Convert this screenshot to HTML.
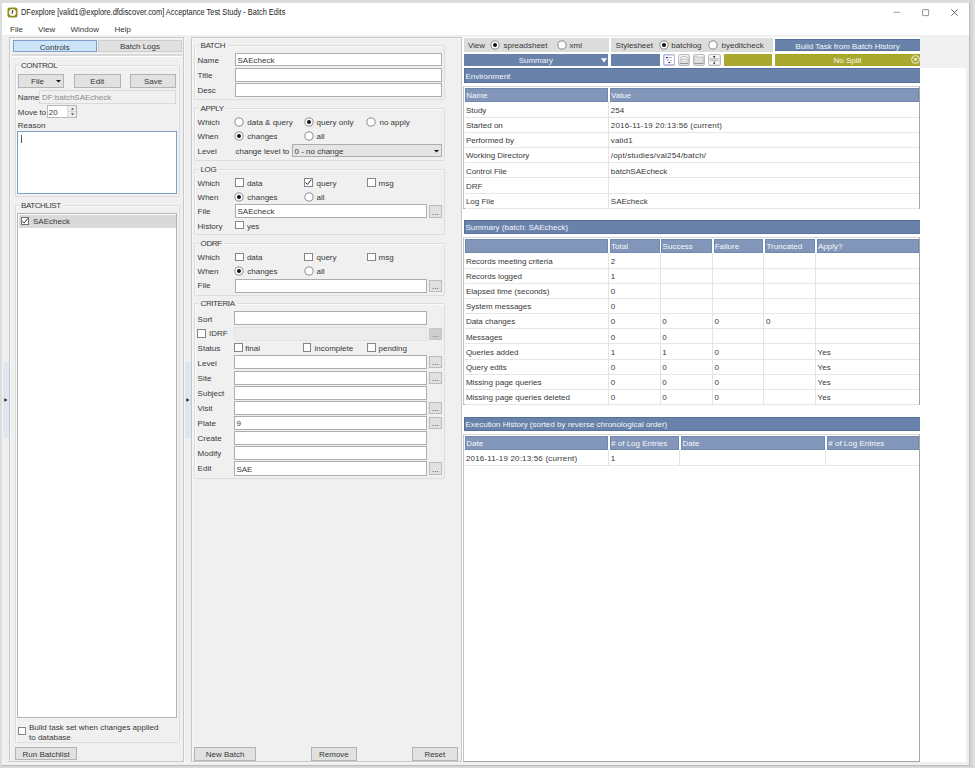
<!DOCTYPE html>
<html><head><meta charset="utf-8"><style>
html,body{margin:0;padding:0;width:975px;height:768px;overflow:hidden;position:relative;background:#dedede}
div{position:absolute}
svg{position:absolute;overflow:visible}
.t{position:absolute;font-family:"Liberation Sans",sans-serif;font-size:8px;line-height:10px;white-space:nowrap;color:#383838}
</style></head><body>
<div style="left:0px;top:0px;width:975px;height:768px;background:#dcdcdc"></div>
<div style="left:970px;top:0px;width:5px;height:768px;background:linear-gradient(to right,#cfcfcf,#e4e4e4)"></div>
<div style="left:0px;top:766px;width:975px;height:2px;background:linear-gradient(to bottom,#cfcfcf,#e0e0e0)"></div>
<div style="left:2px;top:3px;width:968px;height:763px;background:#bdbdbd"></div>
<div style="left:2px;top:3px;width:967px;height:762px;background:#f3f3f3"></div>
<div style="left:3px;top:3px;width:966px;height:762px;background:#f0f0f0"></div>
<div style="left:2px;top:3px;width:967px;height:32px;background:#ffffff"></div>
<svg style="position:absolute;left:7px;top:7px" width="11" height="11" viewBox="0 0 11 11"><rect x="0.5" y="0.5" width="10" height="10" rx="2" fill="#8c8c1e"/><circle cx="5.5" cy="5.5" r="3.6" fill="#f4f4e8"/><path d="M5.6 3.2 L5.2 6.6" stroke="#333" stroke-width="1"/></svg>
<span class="t" style="left:21px;top:7.3px;font-size:8.4px;color:#222;transform-origin:0 0;transform:scaleX(0.886)">DFexplore [valid1@explore.dfdiscover.com] Acceptance Test Study - Batch Edits</span>
<svg style="position:absolute;left:893px;top:8px" width="8" height="8" viewBox="0 0 8 8"><path d="M0.6 4.3 L7 4.3" stroke="#777" stroke-width="0.7"/></svg>
<svg style="position:absolute;left:921.5px;top:8.5px" width="8" height="8" viewBox="0 0 8 8"><rect x="0.6" y="0.6" width="6" height="6" rx="0.6" fill="none" stroke="#666" stroke-width="0.7"/></svg>
<svg style="position:absolute;left:951px;top:9px" width="7" height="7" viewBox="0 0 7 7"><path d="M0.3 0.3 L6.7 6.7 M6.7 0.3 L0.3 6.7" stroke="#444" stroke-width="0.8"/></svg>
<span class="t" style="left:10px;top:24.60px;">File</span>
<span class="t" style="left:38px;top:24.60px;">View</span>
<span class="t" style="left:70.5px;top:24.60px;">Window</span>
<span class="t" style="left:114.5px;top:24.60px;">Help</span>
<div style="left:3px;top:362px;width:6px;height:76px;background:#dfe6f0"></div>
<svg style="position:absolute;left:4px;top:398px" width="4" height="4" viewBox="0 0 4 4"><path d="M0.3 0.2 L3.6 2 L0.3 3.8Z" fill="#222"/></svg>
<div style="left:184.5px;top:362px;width:6.5px;height:76px;background:#dfe6f0"></div>
<svg style="position:absolute;left:186px;top:398px" width="4" height="4" viewBox="0 0 4 4"><path d="M0.3 0.2 L3.6 2 L0.3 3.8Z" fill="#222"/></svg>
<div style="left:10px;top:38px;width:175px;height:725px;border:1px solid #f6f6f6;box-sizing:border-box"></div>
<div style="left:9px;top:37px;width:175px;height:725px;border:1px solid #c8c8c8;box-sizing:border-box"></div>
<div style="left:12.6px;top:40px;width:84px;height:12px;background:#cce4f7;border:1px solid #7d9ccc;box-sizing:border-box"></div>
<span class="t" style="left:12.75px;top:42.85px;width:84px;text-align:center;">Controls</span>
<div style="left:98px;top:40px;width:84px;height:12px;background:#e1e1e1;border:1px solid #cdcdcd;box-sizing:border-box"></div>
<span class="t" style="left:98.0px;top:42.30px;width:84px;text-align:center;">Batch Logs</span>
<div style="left:12px;top:54px;width:170px;height:2px;background:#dadada"></div>
<div style="left:12px;top:56px;width:170px;height:1px;background:#ffffff"></div>
<div style="left:15.5px;top:66px;width:164px;height:130.5px;border:1px solid #fafafa;box-sizing:border-box"></div>
<div style="left:14.5px;top:65px;width:165px;height:131.5px;border:1px solid #dddddd;box-sizing:border-box;border-radius:1px"></div>
<span class="t" style="left:19px;top:61.00px;background:#f0f0f0;padding:0 2px 0 2px;letter-spacing:-0.42px">CONTROL</span>
<div style="left:18px;top:74px;width:46px;height:13.5px;background:#e1e1e1;border:1px solid #b4b4b4;box-sizing:border-box;"></div>
<span class="t" style="left:31px;top:76.80px;">File</span>
<svg style="position:absolute;left:56px;top:79.5px" width="5" height="3" viewBox="0 0 5 3"><path d="M0 0 L5 0 L2.5 2.6Z" fill="#111"/></svg>
<div style="left:74px;top:74px;width:46.5px;height:13.5px;background:#e1e1e1;border:1px solid #b4b4b4;box-sizing:border-box;"></div>
<span class="t" style="left:74.0px;top:76.80px;width:46.5px;text-align:center;">Edit</span>
<div style="left:130px;top:74px;width:46px;height:13.5px;background:#e1e1e1;border:1px solid #b4b4b4;box-sizing:border-box;"></div>
<span class="t" style="left:130.0px;top:76.80px;width:46px;text-align:center;">Save</span>
<span class="t" style="left:17.8px;top:92.60px;">Name</span>
<div style="left:39.4px;top:89.6px;width:137px;height:14px;background:#f0f0f0;border:1px solid #d9d9d9;box-sizing:border-box"></div>
<span class="t" style="left:41.9px;top:92.60px;color:#8a8a8a">DF:batchSAEcheck</span>
<span class="t" style="left:17.8px;top:107.70px;">Move to</span>
<div style="left:47.3px;top:104.8px;width:29.5px;height:13.6px;background:#fff;border:1px solid #b8b8b8;box-sizing:border-box"></div>
<div style="left:67.3px;top:105.8px;width:8.5px;height:11.6px;background:#ececec;border-left:1px solid #dcdcdc;box-sizing:border-box"></div>
<div style="left:68px;top:111.2px;width:7.8px;height:0.8px;background:#d8d8d8"></div>
<svg style="position:absolute;left:69.5px;top:107px" width="5" height="9" viewBox="0 0 5 9"><path d="M1 2.6 L4 2.6 L2.5 1.1Z M1 6.4 L4 6.4 L2.5 7.9Z" fill="#222"/></svg>
<span class="t" style="left:48.8px;top:107.70px;">20</span>
<span class="t" style="left:17.8px;top:120.70px;">Reason</span>
<div style="left:17.2px;top:131.2px;width:160px;height:63px;background:#fff;border:1px solid #7da2ce;box-sizing:border-box"></div>
<div style="left:21px;top:134.5px;width:1px;height:8px;background:#555"></div>
<div style="left:15.5px;top:206px;width:164px;height:537px;border:1px solid #fafafa;box-sizing:border-box"></div>
<div style="left:14.5px;top:205px;width:165px;height:538px;border:1px solid #dddddd;box-sizing:border-box;border-radius:1px"></div>
<span class="t" style="left:19px;top:201.00px;background:#f0f0f0;padding:0 2px 0 2px;letter-spacing:-0.42px">BATCHLIST</span>
<div style="left:17.2px;top:213.3px;width:160px;height:504.6px;background:#fff;border:1px solid #b4b4b4;box-sizing:border-box"></div>
<div style="left:18.5px;top:214.8px;width:157.5px;height:12.8px;background:#d9d9d9"></div>
<div style="left:20.5px;top:216.7px;width:8.5px;height:8.5px;background:#fff;border:1px solid #6f6f6f;box-sizing:border-box"></div>
<svg style="position:absolute;left:21px;top:217px" width="8" height="8" viewBox="0 0 8 8"><path d="M1.3 4.2 L3.2 6 L6.8 1.5" stroke="#222" stroke-width="0.9" fill="none"/></svg>
<span class="t" style="left:33px;top:217.30px;">SAEcheck</span>
<span class="t" style="left:29px;top:722.70px;">Build task set when changes applied</span>
<span class="t" style="left:29px;top:732.50px;">to database</span>
<div style="left:15.4px;top:746.6px;width:61.4px;height:13.5px;background:#e1e1e1;border:1px solid #b4b4b4;box-sizing:border-box;"></div>
<span class="t" style="left:15.400000000000002px;top:749.50px;width:61.4px;text-align:center;">Run Batchlist</span>
<div style="left:192.3px;top:38.3px;width:270.5px;height:724.5px;border:1px solid #f6f6f6;box-sizing:border-box"></div>
<div style="left:191.3px;top:37.3px;width:270.5px;height:724.5px;border:1px solid #c8c8c8;box-sizing:border-box"></div>
<div style="left:17.5px;top:726.8px;width:8.6px;height:8.6px;background:#fff;border:1px solid #858585;box-sizing:border-box"></div>
<div style="left:195.4px;top:46px;width:249.4px;height:54px;border:1px solid #fafafa;box-sizing:border-box"></div>
<div style="left:194.4px;top:45px;width:250.4px;height:55px;border:1px solid #dddddd;box-sizing:border-box;border-radius:1px"></div>
<span class="t" style="left:198.6px;top:41.00px;background:#f0f0f0;padding:0 2px 0 2px;letter-spacing:-0.42px">BATCH</span>
<span class="t" style="left:197.6px;top:55.80px;">Name</span>
<div style="left:235.1px;top:53.2px;width:206.5px;height:13.3px;background:#fff;border:1px solid #adadad;box-sizing:border-box"></div>
<span class="t" style="left:237.5px;top:55.90px;">SAEcheck</span>
<span class="t" style="left:197.6px;top:70.90px;">Title</span>
<div style="left:235.1px;top:68.3px;width:206.5px;height:13.3px;background:#fff;border:1px solid #adadad;box-sizing:border-box"></div>
<span class="t" style="left:197.6px;top:85.90px;">Desc</span>
<div style="left:235.1px;top:83.4px;width:206.5px;height:13.3px;background:#fff;border:1px solid #adadad;box-sizing:border-box"></div>
<div style="left:195.4px;top:109px;width:249.4px;height:51.5px;border:1px solid #fafafa;box-sizing:border-box"></div>
<div style="left:194.4px;top:108px;width:250.4px;height:52.5px;border:1px solid #dddddd;box-sizing:border-box;border-radius:1px"></div>
<span class="t" style="left:198.6px;top:104.00px;background:#f0f0f0;padding:0 2px 0 2px;letter-spacing:-0.42px">APPLY</span>
<span class="t" style="left:197.6px;top:118.30px;">Which</span>
<svg style="position:absolute;left:234.3px;top:117px" width="10" height="10" viewBox="0 0 10 10"><circle cx="5" cy="5" r="4.1" fill="#fff" stroke="#7a7a7a" stroke-width="0.85"/></svg>
<span class="t" style="left:247.3px;top:118.30px;">data &amp; query</span>
<svg style="position:absolute;left:303.7px;top:117px" width="10" height="10" viewBox="0 0 10 10"><circle cx="5" cy="5" r="4.1" fill="#fff" stroke="#7a7a7a" stroke-width="0.85"/><circle cx="5" cy="5" r="2" fill="#111"/></svg>
<span class="t" style="left:316.5px;top:118.30px;">query only</span>
<svg style="position:absolute;left:366.3px;top:117px" width="10" height="10" viewBox="0 0 10 10"><circle cx="5" cy="5" r="4.1" fill="#fff" stroke="#7a7a7a" stroke-width="0.85"/></svg>
<span class="t" style="left:379.5px;top:118.30px;">no apply</span>
<span class="t" style="left:197.6px;top:132.30px;">When</span>
<svg style="position:absolute;left:234.3px;top:131px" width="10" height="10" viewBox="0 0 10 10"><circle cx="5" cy="5" r="4.1" fill="#fff" stroke="#7a7a7a" stroke-width="0.85"/><circle cx="5" cy="5" r="2" fill="#111"/></svg>
<span class="t" style="left:247.3px;top:132.30px;">changes</span>
<svg style="position:absolute;left:303.7px;top:131px" width="10" height="10" viewBox="0 0 10 10"><circle cx="5" cy="5" r="4.1" fill="#fff" stroke="#7a7a7a" stroke-width="0.85"/></svg>
<span class="t" style="left:316.5px;top:132.30px;">all</span>
<span class="t" style="left:197.6px;top:146.60px;">Level</span>
<span class="t" style="left:235.5px;top:146.60px;">change level to</span>
<div style="left:292px;top:143.8px;width:150px;height:13.7px;background:#e5e5e5;border:1px solid #adadad;box-sizing:border-box"></div>
<span class="t" style="left:294.5px;top:146.60px;">0 - no change</span>
<svg style="position:absolute;left:433.5px;top:149.5px" width="5" height="3" viewBox="0 0 5 3"><path d="M0 0 L5 0 L2.5 2.6Z" fill="#111"/></svg>
<div style="left:195.4px;top:170px;width:249.4px;height:65px;border:1px solid #fafafa;box-sizing:border-box"></div>
<div style="left:194.4px;top:169px;width:250.4px;height:66px;border:1px solid #dddddd;box-sizing:border-box;border-radius:1px"></div>
<span class="t" style="left:198.6px;top:165.00px;background:#f0f0f0;padding:0 2px 0 2px;letter-spacing:-0.42px">LOG</span>
<span class="t" style="left:197.6px;top:178.60px;">Which</span>
<div style="left:235.1px;top:178.1px;width:8.6px;height:8.6px;background:#fff;border:1px solid #858585;box-sizing:border-box"></div>
<span class="t" style="left:246.9px;top:178.60px;">data</span>
<div style="left:304.3px;top:178.1px;width:8.6px;height:8.6px;background:#fff;border:1px solid #858585;box-sizing:border-box"></div>
<svg style="position:absolute;left:304.3px;top:178.1px" width="8.6" height="8.6" viewBox="0 0 8 8"><path d="M1.3 4.2 L3.2 6 L6.8 1.5" stroke="#222" stroke-width="0.9" fill="none"/></svg>
<span class="t" style="left:316.5px;top:178.60px;">query</span>
<div style="left:367px;top:178.1px;width:8.6px;height:8.6px;background:#fff;border:1px solid #858585;box-sizing:border-box"></div>
<span class="t" style="left:378.5px;top:178.60px;">msg</span>
<span class="t" style="left:197.6px;top:192.70px;">When</span>
<svg style="position:absolute;left:234.3px;top:191.5px" width="10" height="10" viewBox="0 0 10 10"><circle cx="5" cy="5" r="4.1" fill="#fff" stroke="#7a7a7a" stroke-width="0.85"/><circle cx="5" cy="5" r="2" fill="#111"/></svg>
<span class="t" style="left:247.3px;top:192.70px;">changes</span>
<svg style="position:absolute;left:303.7px;top:191.5px" width="10" height="10" viewBox="0 0 10 10"><circle cx="5" cy="5" r="4.1" fill="#fff" stroke="#7a7a7a" stroke-width="0.85"/></svg>
<span class="t" style="left:316.5px;top:192.70px;">all</span>
<span class="t" style="left:197.6px;top:207.00px;">File</span>
<div style="left:235.1px;top:204.3px;width:191.8px;height:13.8px;background:#fff;border:1px solid #adadad;box-sizing:border-box"></div>
<span class="t" style="left:237.5px;top:207.25px;">SAEcheck</span>
<div style="left:429.3px;top:205.3px;width:12.3px;height:12.4px;background:#e1e1e1;border:1px solid #bcbcbc;box-sizing:border-box"></div>
<span class="t" style="left:429.3px;top:207.60px;width:12.3px;text-align:center;color:#222">...</span>
<span class="t" style="left:197.6px;top:221.70px;">History</span>
<div style="left:235.1px;top:220.7px;width:8.6px;height:8.6px;background:#fff;border:1px solid #858585;box-sizing:border-box"></div>
<span class="t" style="left:246.9px;top:221.70px;">yes</span>
<div style="left:195.4px;top:244px;width:249.4px;height:51.5px;border:1px solid #fafafa;box-sizing:border-box"></div>
<div style="left:194.4px;top:243px;width:250.4px;height:52.5px;border:1px solid #dddddd;box-sizing:border-box;border-radius:1px"></div>
<span class="t" style="left:198.6px;top:239.00px;background:#f0f0f0;padding:0 2px 0 2px;letter-spacing:-0.42px">ODRF</span>
<span class="t" style="left:197.6px;top:253.30px;">Which</span>
<div style="left:235.1px;top:252.5px;width:8.6px;height:8.6px;background:#fff;border:1px solid #858585;box-sizing:border-box"></div>
<span class="t" style="left:246.9px;top:253.30px;">data</span>
<div style="left:304.3px;top:252.5px;width:8.6px;height:8.6px;background:#fff;border:1px solid #858585;box-sizing:border-box"></div>
<span class="t" style="left:316.5px;top:253.30px;">query</span>
<div style="left:367px;top:252.5px;width:8.6px;height:8.6px;background:#fff;border:1px solid #858585;box-sizing:border-box"></div>
<span class="t" style="left:378.5px;top:253.30px;">msg</span>
<span class="t" style="left:197.6px;top:267.30px;">When</span>
<svg style="position:absolute;left:234.3px;top:266px" width="10" height="10" viewBox="0 0 10 10"><circle cx="5" cy="5" r="4.1" fill="#fff" stroke="#7a7a7a" stroke-width="0.85"/><circle cx="5" cy="5" r="2" fill="#111"/></svg>
<span class="t" style="left:247.3px;top:267.30px;">changes</span>
<svg style="position:absolute;left:303.7px;top:266px" width="10" height="10" viewBox="0 0 10 10"><circle cx="5" cy="5" r="4.1" fill="#fff" stroke="#7a7a7a" stroke-width="0.85"/></svg>
<span class="t" style="left:316.5px;top:267.30px;">all</span>
<span class="t" style="left:197.6px;top:281.30px;">File</span>
<div style="left:235.1px;top:279px;width:191.8px;height:13.6px;background:#fff;border:1px solid #adadad;box-sizing:border-box"></div>
<div style="left:429.3px;top:279.6px;width:12.3px;height:12.4px;background:#e1e1e1;border:1px solid #bcbcbc;box-sizing:border-box"></div>
<span class="t" style="left:429.3px;top:281.90px;width:12.3px;text-align:center;color:#222">...</span>
<div style="left:195.4px;top:304px;width:249.4px;height:175px;border:1px solid #fafafa;box-sizing:border-box"></div>
<div style="left:194.4px;top:303px;width:250.4px;height:176px;border:1px solid #dddddd;box-sizing:border-box;border-radius:1px"></div>
<span class="t" style="left:198.6px;top:299.00px;background:#f0f0f0;padding:0 2px 0 2px;letter-spacing:-0.42px">CRITERIA</span>
<span class="t" style="left:197.6px;top:314.70px;">Sort</span>
<div style="left:234px;top:311px;width:193px;height:14.2px;background:#fff;border:1px solid #adadad;box-sizing:border-box"></div>
<div style="left:197.3px;top:329.1px;width:8.6px;height:8.6px;background:#fff;border:1px solid #858585;box-sizing:border-box"></div>
<span class="t" style="left:209px;top:329.30px;">IDRF</span>
<div style="left:234px;top:326.6px;width:193px;height:14px;background:#ececec;border:1px solid #e2e2e2;box-sizing:border-box"></div>
<div style="left:429.3px;top:327.6px;width:12.3px;height:12.4px;background:#cdcdcd;border:1px solid #c6c6c6;box-sizing:border-box"></div>
<span class="t" style="left:429.3px;top:330.10px;width:12.3px;text-align:center;color:#666">...</span>
<span class="t" style="left:197.6px;top:344.00px;">Status</span>
<div style="left:234px;top:343.1px;width:8.6px;height:8.6px;background:#fff;border:1px solid #858585;box-sizing:border-box"></div>
<span class="t" style="left:245.3px;top:344.00px;">final</span>
<div style="left:302.9px;top:343.1px;width:8.6px;height:8.6px;background:#fff;border:1px solid #858585;box-sizing:border-box"></div>
<span class="t" style="left:314.5px;top:344.00px;">incomplete</span>
<div style="left:367px;top:343.1px;width:8.6px;height:8.6px;background:#fff;border:1px solid #858585;box-sizing:border-box"></div>
<span class="t" style="left:378.5px;top:344.00px;">pending</span>
<span class="t" style="left:197.6px;top:358.70px;">Level</span>
<div style="left:234px;top:355px;width:193px;height:14.2px;background:#fff;border:1px solid #adadad;box-sizing:border-box"></div>
<div style="left:429.3px;top:356px;width:12.3px;height:12.4px;background:#e1e1e1;border:1px solid #bcbcbc;box-sizing:border-box"></div>
<span class="t" style="left:429.3px;top:358.30px;width:12.3px;text-align:center;color:#222">...</span>
<span class="t" style="left:197.6px;top:373.70px;">Site</span>
<div style="left:234px;top:371px;width:193px;height:14.2px;background:#fff;border:1px solid #adadad;box-sizing:border-box"></div>
<div style="left:429.3px;top:372px;width:12.3px;height:12.4px;background:#e1e1e1;border:1px solid #bcbcbc;box-sizing:border-box"></div>
<span class="t" style="left:429.3px;top:374.30px;width:12.3px;text-align:center;color:#222">...</span>
<span class="t" style="left:197.6px;top:388.70px;">Subject</span>
<div style="left:234px;top:386px;width:193px;height:14.2px;background:#fff;border:1px solid #adadad;box-sizing:border-box"></div>
<span class="t" style="left:197.6px;top:404.00px;">Visit</span>
<div style="left:234px;top:401px;width:193px;height:14.2px;background:#fff;border:1px solid #adadad;box-sizing:border-box"></div>
<div style="left:429.3px;top:402px;width:12.3px;height:12.4px;background:#e1e1e1;border:1px solid #bcbcbc;box-sizing:border-box"></div>
<span class="t" style="left:429.3px;top:404.30px;width:12.3px;text-align:center;color:#222">...</span>
<span class="t" style="left:197.6px;top:419.00px;">Plate</span>
<div style="left:234px;top:416px;width:193px;height:14.2px;background:#fff;border:1px solid #adadad;box-sizing:border-box"></div>
<span class="t" style="left:236.4px;top:419.15px;">9</span>
<div style="left:429.3px;top:417px;width:12.3px;height:12.4px;background:#e1e1e1;border:1px solid #bcbcbc;box-sizing:border-box"></div>
<span class="t" style="left:429.3px;top:419.30px;width:12.3px;text-align:center;color:#222">...</span>
<span class="t" style="left:197.6px;top:434.00px;">Create</span>
<div style="left:234px;top:431px;width:193px;height:14.2px;background:#fff;border:1px solid #adadad;box-sizing:border-box"></div>
<span class="t" style="left:197.6px;top:449.00px;">Modify</span>
<div style="left:234px;top:446px;width:193px;height:14.2px;background:#fff;border:1px solid #adadad;box-sizing:border-box"></div>
<span class="t" style="left:197.6px;top:464.30px;">Edit</span>
<div style="left:234px;top:461.4px;width:193px;height:14.2px;background:#fff;border:1px solid #adadad;box-sizing:border-box"></div>
<span class="t" style="left:236.4px;top:464.55px;">SAE</span>
<div style="left:429.3px;top:462.4px;width:12.3px;height:12.4px;background:#e1e1e1;border:1px solid #bcbcbc;box-sizing:border-box"></div>
<span class="t" style="left:429.3px;top:464.70px;width:12.3px;text-align:center;color:#222">...</span>
<div style="left:194.4px;top:746.8px;width:61.3px;height:14px;background:#e1e1e1;border:1px solid #b4b4b4;box-sizing:border-box;"></div>
<span class="t" style="left:194.4px;top:750.10px;width:61.3px;text-align:center;">New Batch</span>
<div style="left:311.2px;top:746.8px;width:45.4px;height:14px;background:#e1e1e1;border:1px solid #b4b4b4;box-sizing:border-box;"></div>
<span class="t" style="left:311.2px;top:750.10px;width:45.4px;text-align:center;">Remove</span>
<div style="left:412.1px;top:746.8px;width:45.5px;height:14px;background:#e1e1e1;border:1px solid #b4b4b4;box-sizing:border-box;"></div>
<span class="t" style="left:412.1px;top:750.10px;width:45.5px;text-align:center;">Reset</span>
<div style="left:462px;top:37px;width:504px;height:725px;background:#ffffff"></div>
<div style="left:920px;top:35px;width:46px;height:32.5px;background:#f0f0f0"></div>
<div style="left:463.5px;top:38.4px;width:145px;height:13.3px;background:#dcdcdc"></div>
<div style="left:610.7px;top:38.4px;width:162px;height:13.3px;background:#dcdcdc"></div>
<span class="t" style="left:467.9px;top:40.90px;">View</span>
<svg style="position:absolute;left:490.2px;top:39.7px" width="10" height="10" viewBox="0 0 10 10"><circle cx="5" cy="5" r="4.1" fill="#fff" stroke="#7a7a7a" stroke-width="0.85"/><circle cx="5" cy="5" r="2" fill="#111"/></svg>
<span class="t" style="left:503.5px;top:40.90px;">spreadsheet</span>
<svg style="position:absolute;left:557.2px;top:39.7px" width="10" height="10" viewBox="0 0 10 10"><circle cx="5" cy="5" r="4.1" fill="#fff" stroke="#7a7a7a" stroke-width="0.85"/></svg>
<span class="t" style="left:569.6px;top:40.90px;">xml</span>
<span class="t" style="left:615.6px;top:40.90px;">Stylesheet</span>
<svg style="position:absolute;left:658.5px;top:39.7px" width="10" height="10" viewBox="0 0 10 10"><circle cx="5" cy="5" r="4.1" fill="#fff" stroke="#7a7a7a" stroke-width="0.85"/><circle cx="5" cy="5" r="2" fill="#111"/></svg>
<span class="t" style="left:671.3px;top:40.90px;">batchlog</span>
<svg style="position:absolute;left:708.2px;top:39.7px" width="10" height="10" viewBox="0 0 10 10"><circle cx="5" cy="5" r="4.1" fill="#fff" stroke="#7a7a7a" stroke-width="0.85"/></svg>
<span class="t" style="left:721.5px;top:40.90px;">byeditcheck</span>
<div style="left:775px;top:38.8px;width:145px;height:12.4px;background:#6882aa;border-top:1px solid #53709f;border-bottom:1px solid #53709f;box-sizing:border-box"></div>
<span class="t" style="left:775.0px;top:41.60px;width:145px;text-align:center;color:#f4f6fa">Build Task from Batch History</span>
<div style="left:463.7px;top:53.9px;width:144.5px;height:12px;background:#6882aa"></div>
<span class="t" style="left:465.79999999999995px;top:55.60px;width:140px;text-align:center;color:#f4f6fa">Summary</span>
<svg style="position:absolute;left:600.5px;top:58px" width="6" height="5" viewBox="0 0 6 5"><path d="M0 0.2 L6 0.2 L3 4.6Z" fill="#fff"/></svg>
<div style="left:611.3px;top:53.9px;width:48.7px;height:12px;background:#6882aa"></div>
<div style="left:663.1px;top:54px;width:12.4px;height:11.8px;border:1px solid #c4c4c4;border-radius:2px;background:#fff;box-sizing:border-box;box-shadow:inset -0.5px -0.5px 0 #d0d0d0"></div>
<svg style="position:absolute;left:663.1px;top:54px" width="12.4" height="11.8" viewBox="0 0 12.4 11.8"><rect x="1" y="1" width="10.4" height="9.8" fill="#fff" stroke="#a9a9de" stroke-width="0.9"/><ellipse cx="3.8" cy="3.4" rx="1.1" ry="0.75" fill="#1a1aa0"/><rect x="5.4" y="3.1" width="3.6" height="0.7" fill="#8a8ab0"/><rect x="4.1" y="5.4" width="1.5" height="1.2" fill="#8c96b8"/><rect x="6.8" y="6" width="2.2" height="0.7" fill="#9a9aba"/><ellipse cx="6.2" cy="8.4" rx="1" ry="0.75" fill="#1a1aa0"/><rect x="7.6" y="8.2" width="1.2" height="0.6" fill="#9a9aba"/></svg>
<div style="left:678px;top:54px;width:12.4px;height:11.8px;border:1px solid #bdbdbd;border-radius:2px;background:#f6f6f6;box-sizing:border-box;box-shadow:inset -0.5px -0.5px 0 #d0d0d0"></div>
<svg style="position:absolute;left:678px;top:54px" width="12.4" height="11.8" viewBox="0 0 12.4 11.8"><path d="M1.6 4.2 Q6.2 0.6 10.6 4.2" fill="none" stroke="#b0b0b0" stroke-width="0.8"/><path d="M1.8 9.6 L2.6 5.2 L10.6 5.2 L10 9.6Z" fill="#e2e2e2" stroke="#a8a8a8" stroke-width="0.6"/><rect x="1.8" y="9.2" width="8.6" height="0.8" fill="#8a8a8a"/></svg>
<div style="left:693.1px;top:54px;width:12.4px;height:11.8px;border:1px solid #bdbdbd;border-radius:2px;background:#f6f6f6;box-sizing:border-box;box-shadow:inset -0.5px -0.5px 0 #d0d0d0"></div>
<svg style="position:absolute;left:693.1px;top:54px" width="12.4" height="11.8" viewBox="0 0 12.4 11.8"><path d="M1.5 9.6 L1.5 2.2 L4.8 2.2 L5.6 3.2 L10.4 3.2 L10.4 9.6Z" fill="#e0e0e0" stroke="#b0b0b0" stroke-width="0.6"/><rect x="1.5" y="9.1" width="8.9" height="0.8" fill="#8a8a8a"/></svg>
<div style="left:708.4px;top:54px;width:12.4px;height:11.8px;border:1px solid #bdbdbd;border-radius:2px;background:#f6f6f6;box-sizing:border-box;box-shadow:inset -0.5px -0.5px 0 #d0d0d0"></div>
<svg style="position:absolute;left:708.4px;top:54px" width="12.4" height="11.8" viewBox="0 0 12.4 11.8"><path d="M6.2 1.6 L4.9 3.1 L7.5 3.1Z M6.2 10.2 L4.9 8.7 L7.5 8.7Z" fill="#111"/><rect x="1.6" y="4.4" width="9" height="0.8" fill="#9a9a9a"/><rect x="1.6" y="6.3" width="9" height="0.8" fill="#a4a4a4"/><rect x="5.9" y="3" width="0.6" height="1.5" fill="#333"/><rect x="5.9" y="7.2" width="0.6" height="1.5" fill="#333"/></svg>
<div style="left:723.5px;top:53.9px;width:48.8px;height:12px;background:#a9a92f"></div>
<div style="left:775px;top:53.8px;width:145px;height:12.1px;background:#a9a92f;border-top:1px solid #a2a21c;border-bottom:1px solid #a2a21c;box-sizing:border-box"></div>
<span class="t" style="left:775.0px;top:56.10px;width:145px;text-align:center;color:#f6f6e6">No Split</span>
<svg style="position:absolute;left:910.5px;top:55.4px" width="9" height="9" viewBox="0 0 9 9"><circle cx="4.5" cy="4.5" r="3.9" fill="none" stroke="#f0f0dc" stroke-width="1"/><path d="M2.2 3.3 L6.8 3.3 L4.5 6.6Z" fill="#f0f0dc"/></svg>
<div style="left:463.9px;top:68.3px;width:456px;height:14.4px;background:#6882aa;border-top:1px solid #53709f;border-bottom:1px solid #53709f;border-left:1px solid #53709f;box-sizing:border-box"></div>
<span class="t" style="left:465.4px;top:71.60px;color:#f4f6fa">Environment</span>
<div style="left:463.3px;top:86.2px;width:456.49999999999994px;height:122.60000000000001px;background:#fff;border-top:1px solid #d6d6d6;border-left:1px solid #c4c4c8;border-right:1px solid #a4a4a4;border-bottom:1px solid #a4a4a4;box-sizing:border-box"></div>
<div style="left:465.0px;top:87.60000000000001px;width:143.10000000000002px;height:14.6px;background:#8196b8;border:1px solid #7189b1;box-sizing:border-box"></div>
<span class="t" style="left:466.2px;top:90.80px;color:#f6f8fb">Name</span>
<div style="left:609.9px;top:87.60000000000001px;width:308.69999999999993px;height:14.6px;background:#8196b8;border:1px solid #7189b1;box-sizing:border-box"></div>
<span class="t" style="left:611.1px;top:90.80px;color:#f6f8fb">Value</span>
<div style="left:464.8px;top:116.60000000000001px;width:453.79999999999995px;height:1px;background:#e6e6e6"></div>
<span class="t" style="left:465.9px;top:105.70px;">Study</span>
<span class="t" style="left:610.8px;top:105.70px;">254</span>
<div style="left:464.8px;top:131.79999999999998px;width:453.79999999999995px;height:1px;background:#e6e6e6"></div>
<span class="t" style="left:465.9px;top:120.90px;">Started on</span>
<span class="t" style="left:610.8px;top:120.90px;letter-spacing:0.18px">2016-11-19 20:13:56 (current)</span>
<div style="left:464.8px;top:146.99999999999997px;width:453.79999999999995px;height:1px;background:#e6e6e6"></div>
<span class="t" style="left:465.9px;top:136.10px;">Performed by</span>
<span class="t" style="left:610.8px;top:136.10px;letter-spacing:0.18px">valid1</span>
<div style="left:464.8px;top:162.2px;width:453.79999999999995px;height:1px;background:#e6e6e6"></div>
<span class="t" style="left:465.9px;top:151.30px;">Working Directory</span>
<span class="t" style="left:610.8px;top:151.30px;letter-spacing:0.18px">/opt/studies/val254/batch/</span>
<div style="left:464.8px;top:177.39999999999998px;width:453.79999999999995px;height:1px;background:#e6e6e6"></div>
<span class="t" style="left:465.9px;top:166.50px;">Control File</span>
<span class="t" style="left:610.8px;top:166.50px;">batchSAEcheck</span>
<div style="left:464.8px;top:192.59999999999997px;width:453.79999999999995px;height:1px;background:#e6e6e6"></div>
<span class="t" style="left:465.9px;top:181.70px;">DRF</span>
<div style="left:464.8px;top:207.79999999999995px;width:453.79999999999995px;height:1px;background:#e6e6e6"></div>
<span class="t" style="left:465.9px;top:196.90px;">Log File</span>
<span class="t" style="left:610.8px;top:196.90px;">SAEcheck</span>
<div style="left:608px;top:102.2px;width:1px;height:106.39999999999999px;background:#e4e4e4"></div>
<div style="left:463.9px;top:219.6px;width:456px;height:14.4px;background:#6882aa;border-top:1px solid #53709f;border-bottom:1px solid #53709f;border-left:1px solid #53709f;box-sizing:border-box"></div>
<span class="t" style="left:465.4px;top:222.90px;color:#f4f6fa">Summary (batch: SAEcheck)</span>
<div style="left:463.3px;top:237.3px;width:456.49999999999994px;height:167.89999999999998px;background:#fff;border-top:1px solid #d6d6d6;border-left:1px solid #c4c4c8;border-right:1px solid #a4a4a4;border-bottom:1px solid #a4a4a4;box-sizing:border-box"></div>
<div style="left:465.0px;top:238.70000000000002px;width:143.10000000000002px;height:14.6px;background:#8196b8;border:1px solid #7189b1;box-sizing:border-box"></div>
<div style="left:609.9px;top:238.70000000000002px;width:49.700000000000045px;height:14.6px;background:#8196b8;border:1px solid #7189b1;box-sizing:border-box"></div>
<span class="t" style="left:611.1px;top:241.90px;color:#f6f8fb">Total</span>
<div style="left:661.4px;top:238.70000000000002px;width:50.30000000000007px;height:14.6px;background:#8196b8;border:1px solid #7189b1;box-sizing:border-box"></div>
<span class="t" style="left:662.6px;top:241.90px;color:#f6f8fb">Success</span>
<div style="left:713.5px;top:238.70000000000002px;width:49.89999999999998px;height:14.6px;background:#8196b8;border:1px solid #7189b1;box-sizing:border-box"></div>
<span class="t" style="left:714.7px;top:241.90px;color:#f6f8fb">Failure</span>
<div style="left:765.1999999999999px;top:238.70000000000002px;width:49.700000000000045px;height:14.6px;background:#8196b8;border:1px solid #7189b1;box-sizing:border-box"></div>
<span class="t" style="left:766.4px;top:241.90px;color:#f6f8fb">Truncated</span>
<div style="left:816.6999999999999px;top:238.70000000000002px;width:101.89999999999998px;height:14.6px;background:#8196b8;border:1px solid #7189b1;box-sizing:border-box"></div>
<span class="t" style="left:817.9px;top:241.90px;color:#f6f8fb">Apply?</span>
<div style="left:464.8px;top:267.65px;width:453.79999999999995px;height:1px;background:#e6e6e6"></div>
<span class="t" style="left:465.9px;top:256.77px;">Records meeting criteria</span>
<span class="t" style="left:610.8px;top:256.77px;">2</span>
<div style="left:464.8px;top:282.79999999999995px;width:453.79999999999995px;height:1px;background:#e6e6e6"></div>
<span class="t" style="left:465.9px;top:271.92px;">Records logged</span>
<span class="t" style="left:610.8px;top:271.92px;">1</span>
<div style="left:464.8px;top:297.95px;width:453.79999999999995px;height:1px;background:#e6e6e6"></div>
<span class="t" style="left:465.9px;top:287.07px;">Elapsed time (seconds)</span>
<span class="t" style="left:610.8px;top:287.07px;">0</span>
<div style="left:464.8px;top:313.09999999999997px;width:453.79999999999995px;height:1px;background:#e6e6e6"></div>
<span class="t" style="left:465.9px;top:302.22px;">System messages</span>
<span class="t" style="left:610.8px;top:302.22px;">0</span>
<div style="left:464.8px;top:328.25px;width:453.79999999999995px;height:1px;background:#e6e6e6"></div>
<span class="t" style="left:465.9px;top:317.38px;">Data changes</span>
<span class="t" style="left:610.8px;top:317.38px;">0</span>
<span class="t" style="left:662.3px;top:317.38px;">0</span>
<span class="t" style="left:714.4px;top:317.38px;">0</span>
<span class="t" style="left:766.0999999999999px;top:317.38px;">0</span>
<div style="left:464.8px;top:343.4px;width:453.79999999999995px;height:1px;background:#e6e6e6"></div>
<span class="t" style="left:465.9px;top:332.52px;">Messages</span>
<span class="t" style="left:610.8px;top:332.52px;">0</span>
<span class="t" style="left:662.3px;top:332.52px;">0</span>
<div style="left:464.8px;top:358.55px;width:453.79999999999995px;height:1px;background:#e6e6e6"></div>
<span class="t" style="left:465.9px;top:347.68px;">Queries added</span>
<span class="t" style="left:610.8px;top:347.68px;">1</span>
<span class="t" style="left:662.3px;top:347.68px;">1</span>
<span class="t" style="left:714.4px;top:347.68px;">0</span>
<span class="t" style="left:817.5999999999999px;top:347.68px;">Yes</span>
<div style="left:464.8px;top:373.7px;width:453.79999999999995px;height:1px;background:#e6e6e6"></div>
<span class="t" style="left:465.9px;top:362.82px;">Query edits</span>
<span class="t" style="left:610.8px;top:362.82px;">0</span>
<span class="t" style="left:662.3px;top:362.82px;">0</span>
<span class="t" style="left:714.4px;top:362.82px;">0</span>
<span class="t" style="left:817.5999999999999px;top:362.82px;">Yes</span>
<div style="left:464.8px;top:388.84999999999997px;width:453.79999999999995px;height:1px;background:#e6e6e6"></div>
<span class="t" style="left:465.9px;top:377.97px;">Missing page queries</span>
<span class="t" style="left:610.8px;top:377.97px;">0</span>
<span class="t" style="left:662.3px;top:377.97px;">0</span>
<span class="t" style="left:714.4px;top:377.97px;">0</span>
<span class="t" style="left:817.5999999999999px;top:377.97px;">Yes</span>
<div style="left:464.8px;top:403.99999999999994px;width:453.79999999999995px;height:1px;background:#e6e6e6"></div>
<span class="t" style="left:465.9px;top:393.12px;">Missing page queries deleted</span>
<span class="t" style="left:610.8px;top:393.12px;">0</span>
<span class="t" style="left:662.3px;top:393.12px;">0</span>
<span class="t" style="left:714.4px;top:393.12px;">0</span>
<span class="t" style="left:817.5999999999999px;top:393.12px;">Yes</span>
<div style="left:608px;top:253.3px;width:1px;height:151.5px;background:#e4e4e4"></div>
<div style="left:659.5px;top:253.3px;width:1px;height:151.5px;background:#e4e4e4"></div>
<div style="left:711.6px;top:253.3px;width:1px;height:151.5px;background:#e4e4e4"></div>
<div style="left:763.3px;top:253.3px;width:1px;height:151.5px;background:#e4e4e4"></div>
<div style="left:814.8px;top:253.3px;width:1px;height:151.5px;background:#e4e4e4"></div>
<div style="left:463.9px;top:416.7px;width:456px;height:14.3px;background:#6882aa;border-top:1px solid #53709f;border-bottom:1px solid #53709f;border-left:1px solid #53709f;box-sizing:border-box"></div>
<span class="t" style="left:465.4px;top:419.95px;color:#f4f6fa">Execution History (sorted by reverse chronological order)</span>
<div style="left:463.3px;top:434.4px;width:456.49999999999994px;height:327.6px;background:#fff;border-top:1px solid #d6d6d6;border-left:1px solid #c4c4c8;border-right:1px solid #a4a4a4;border-bottom:1px solid #a4a4a4;box-sizing:border-box"></div>
<div style="left:465.0px;top:435.79999999999995px;width:143.10000000000002px;height:14.6px;background:#8196b8;border:1px solid #7189b1;box-sizing:border-box"></div>
<span class="t" style="left:466.2px;top:439.00px;color:#f6f8fb">Date</span>
<div style="left:609.9px;top:435.79999999999995px;width:69.60000000000002px;height:14.6px;background:#8196b8;border:1px solid #7189b1;box-sizing:border-box"></div>
<span class="t" style="left:611.1px;top:439.00px;color:#f6f8fb"># of Log Entries</span>
<div style="left:681.3px;top:435.79999999999995px;width:144.0000000000001px;height:14.6px;background:#8196b8;border:1px solid #7189b1;box-sizing:border-box"></div>
<span class="t" style="left:682.5px;top:439.00px;color:#f6f8fb">Date</span>
<div style="left:827.1px;top:435.79999999999995px;width:91.49999999999989px;height:14.6px;background:#8196b8;border:1px solid #7189b1;box-sizing:border-box"></div>
<span class="t" style="left:828.3000000000001px;top:439.00px;color:#f6f8fb"># of Log Entries</span>
<div style="left:464.8px;top:464.79999999999995px;width:453.79999999999995px;height:1px;background:#e6e6e6"></div>
<span class="t" style="left:465.9px;top:453.90px;letter-spacing:0.18px">2016-11-19 20:13:56 (current)</span>
<span class="t" style="left:610.8px;top:453.90px;">1</span>
<div style="left:608px;top:450.4px;width:1px;height:15.199999999999989px;background:#e4e4e4"></div>
<div style="left:679.4px;top:450.4px;width:1px;height:15.199999999999989px;background:#e4e4e4"></div>
<div style="left:825.2px;top:450.4px;width:1px;height:15.199999999999989px;background:#e4e4e4"></div>
</body></html>
